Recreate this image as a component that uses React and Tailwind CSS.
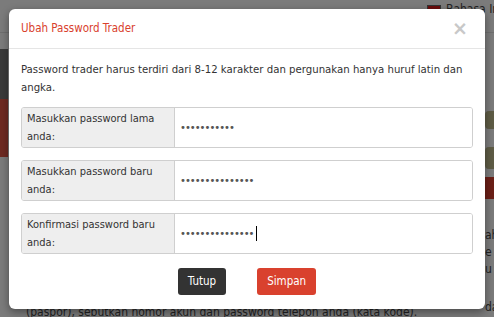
import React from 'react';

const PasswordRow = ({ label, dots, caret }) => (
    <div className="flex h-[41px] border border-[#cfcfcf] rounded-[3px] overflow-hidden">
        <div className="w-[153px] shrink-0 bg-[#eeeeee] border-r border-[#cfcfcf] px-[5px] flex items-center text-[11px] leading-[18px] text-[#333]">
            {label}
        </div>
        <div className="flex-1 bg-white flex items-center pl-[5px]">
            <span className="font-['DejaVu_Sans',sans-serif] text-[10px] tracking-[-1px] text-[#555] leading-none">{'•'.repeat(dots)}</span>
            {caret && <span className="ml-[3px] w-px h-[15px] bg-black" />}
        </div>
    </div>
);

const App = () => {
    return (
        <div className="relative w-[494px] h-[317px] overflow-hidden bg-[#7b7b7b] font-['DejaVu_Sans_Condensed','DejaVu_Sans',sans-serif]">
            {/* dimmed page behind the dialog */}
            <div className="flex justify-end items-center h-[16px] pt-[2px] gap-[5px] text-[12px] text-[#222]">
                <span className="w-[14px] h-[9px] bg-[#6a0b0b] border border-[#333]" />
                <span className="w-[48px] overflow-hidden whitespace-nowrap leading-none">Bahasa Indonesia</span>
            </div>
            <div className="h-[17px] border-b border-[#6e6e6e]" />
            <div className="flex">
                <div className="w-[8px] mt-[16px]">
                    <div className="h-[50px] bg-[#3a3a3a]" />
                    <div className="h-[58px] bg-[#6e2a22]" />
                </div>
                <div className="flex-1" />
                <div className="w-[9px] mt-[78px] flex flex-col">
                    <div className="h-[18px] bg-[#5e5c45] rounded-l-[4px]" />
                    <div className="h-[18px]" />
                    <div className="h-[22px] bg-[#5e5c45] rounded-l-[4px]" />
                    <div className="h-[8px]" />
                    <div className="h-[22px] bg-[#6b1f17]" />
                    <div className="mt-[28px] text-[12px] leading-[17px] text-[#222] whitespace-nowrap">ah<br />e<br />u</div>
                    <div className="mt-[20px] text-[12px] text-[#222] whitespace-nowrap">da</div>
                </div>
            </div>
            <div className="absolute left-[26px] top-[303px] text-[12px] text-[#222] whitespace-nowrap">
                (paspor), sebutkan nomor akun dan password telepon anda (kata kode).
            </div>

            {/* dialog */}
            <div className="absolute left-[9px] top-[9px] w-[476px] h-[300px] bg-white rounded-[6px] shadow-[0_3px_9px_rgba(0,0,0,0.4)] flex flex-col">
                <div className="h-[40px] flex items-center justify-between px-[12px] border-b border-[#e5e5e5]">
                    <span className="text-[11.5px] text-[#d9412e]">Ubah Password Trader</span>
                    <span className="font-['DejaVu_Sans',sans-serif] text-[19px] font-bold text-[#c8c8c8] leading-none mr-[5px]">×</span>
                </div>
                <div className="px-[12px] pt-[12px] flex flex-col">
                    <p className="text-[11.3px] leading-[18px] text-[#333]">
                        Password trader harus terdiri dari 8-12 karakter dan pergunakan hanya huruf latin dan angka.
                    </p>
                    <div className="mt-[10px] flex flex-col gap-[12px]">
                        <PasswordRow label="Masukkan password lama anda:" dots={11} />
                        <PasswordRow label="Masukkan password baru anda:" dots={15} />
                        <PasswordRow label="Konfirmasi password baru anda:" dots={15} caret />
                    </div>
                    <div className="mt-[14px] flex justify-center gap-[31px]">
                        <button className="h-[27px] px-[10px] rounded-[3px] bg-[#333333] text-white text-[11.5px]">Tutup</button>
                        <button className="h-[27px] px-[10px] rounded-[3px] bg-[#d9412e] text-white text-[11.5px]">Simpan</button>
                    </div>
                </div>
            </div>
        </div>
    );
};

export default App;
